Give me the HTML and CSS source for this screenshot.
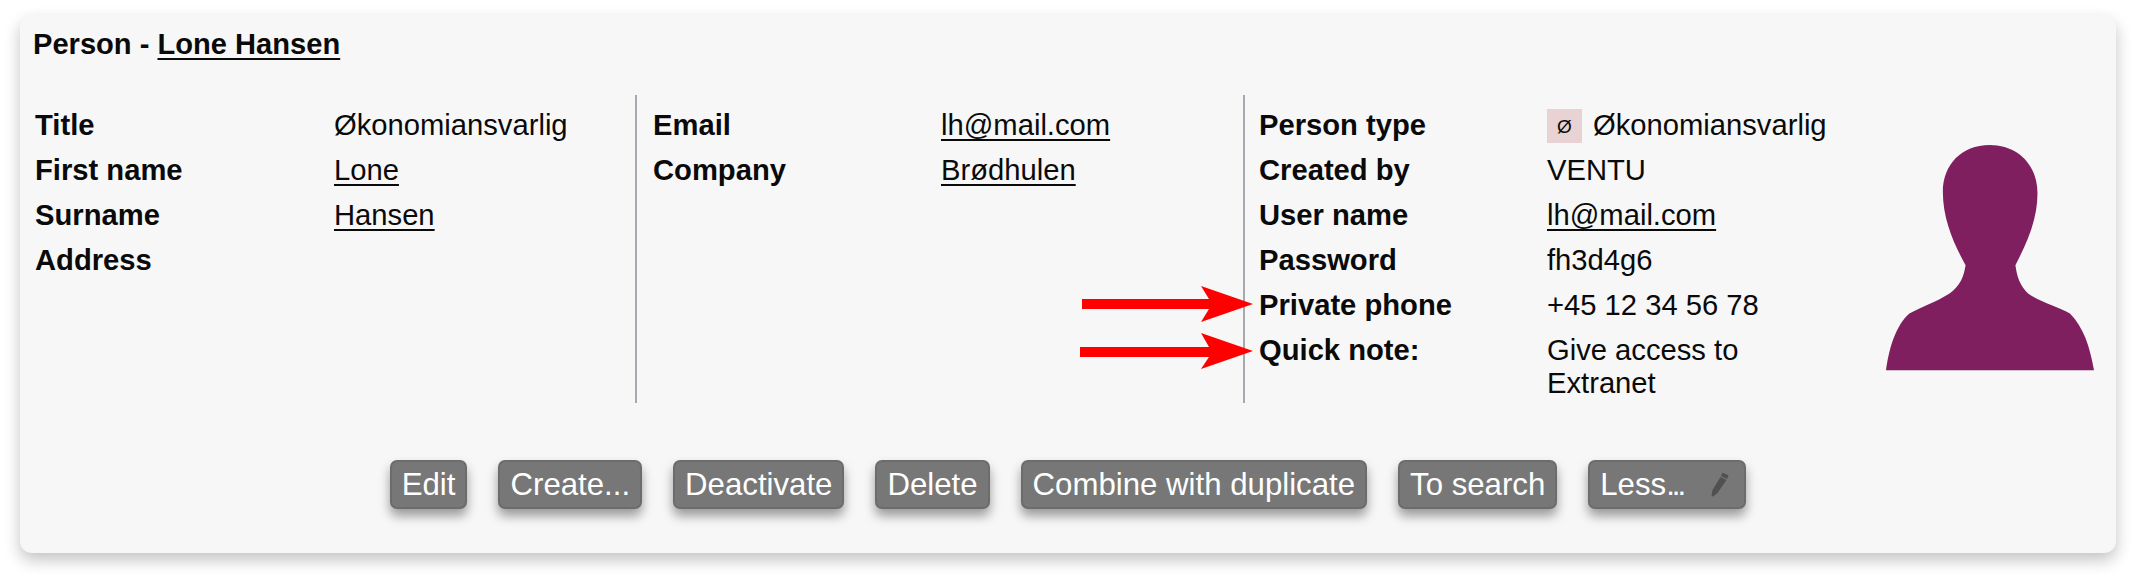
FILE: index.html
```html
<!DOCTYPE html>
<html lang="en">
<head>
<meta charset="utf-8">
<title>Person - Lone Hansen</title>
<link rel="stylesheet" href="styles.css">
</head>
<body>
<main class="card">
  <h1 class="title">Person - <a href="#">Lone Hansen</a></h1>
  <div class="columns">
    <dl class="col col-a">
      <dt>Title</dt><dd>Økonomiansvarlig</dd>
      <dt>First name</dt><dd><a href="#">Lone</a></dd>
      <dt>Surname</dt><dd><a href="#">Hansen</a></dd>
      <dt>Address</dt><dd></dd>
    </dl>
    <dl class="col col-b">
      <dt>Email</dt><dd><a href="#">lh@mail.com</a></dd>
      <dt>Company</dt><dd><a href="#">Brødhulen</a></dd>
    </dl>
    <dl class="col col-c">
      <dt>Person type</dt><dd class="type"><span class="badge">Ø</span>Økonomiansvarlig</dd>
      <dt>Created by</dt><dd>VENTU</dd>
      <dt>User name</dt><dd><a href="#">lh@mail.com</a></dd>
      <dt>Password</dt><dd>fh3d4g6</dd>
      <dt>Private phone</dt><dd>+45 12 34 56 78</dd>
      <dt>Quick note:</dt><dd class="note">Give access to Extranet</dd>
    </dl>
    <svg class="avatar" viewBox="80 45 622 677" preserveAspectRatio="none" aria-hidden="true">
      <path d="M390 45C305 45 250 105 250 185C250 270 285 345 318 405C312 440 303 465 270 490C225 518 185 530 150 550C110 585 90 650 80 720L702 720C690 650 670 590 630 550C595 530 545 518 505 490C480 465 472 440 467 405C495 350 533 275 533 190C533 105 475 45 390 45Z"/>
    </svg>
  </div>
  <div class="actions">
    <button type="button" class="btn">Edit</button>
    <button type="button" class="btn">Create...</button>
    <button type="button" class="btn">Deactivate</button>
    <button type="button" class="btn">Delete</button>
    <button type="button" class="btn">Combine with duplicate</button>
    <button type="button" class="btn">To search</button>
    <button type="button" class="btn btn-less">Less<span class="dots">...</span>
      <svg class="pencil" viewBox="0 0 18 25" aria-hidden="true"><path d="M11.5 0.5L17.5 3.5L16 7L10 4ZM9.5 5L15.5 8L6.5 21L2 24.5L0.5 24L1.5 18Z"/></svg>
    </button>
  </div>
  <svg class="arrow arrow-one" viewBox="0 0 171 36" aria-hidden="true"><path d="M0 13H127L119 0L171 18L119 36L127 23H0Z"/></svg>
  <svg class="arrow arrow-two" viewBox="0 0 173 36" aria-hidden="true"><path d="M0 14H129L121 0L173 18L121 36L129 24H0Z"/></svg>
</main>
</body>
</html>
```
FILE: styles.css
```css
* { box-sizing: border-box; }
html, body { margin: 0; background: #fff; }
body {
  min-height: 575px;
  padding: 15px 15px 22px 20px;
  font-family: "Liberation Sans", Arial, sans-serif;
  color: #0a0a0a;
}
a { color: inherit; text-decoration: underline; text-decoration-thickness: 2px; text-underline-offset: 4px; }

.card {
  position: relative;
  height: 538px;
  padding: 7px 0 44px;
  background: #f7f7f7;
  border-radius: 12px;
  box-shadow: 0 7px 16px rgba(0, 0, 0, .24);
}
.title {
  margin: 0;
  padding-left: 13px;
  font-size: 29.1px;
  font-weight: 700;
  line-height: 45px;
}
.columns { display: flex; height: 308px; margin-top: 28px; }
.col {
  display: grid;
  align-content: start;
  grid-auto-rows: minmax(45px, auto);
  margin: 0;
  padding-top: 8px;
  font-size: 29.2px;
  line-height: 45px;
}
.col dt { font-weight: 700; }
.col dd { margin: 0; }
.col-a { width: 617px; grid-template-columns: 299px 1fr; padding-left: 15px; border-right: 2px solid #a6aaae; }
.col-b { width: 608px; grid-template-columns: 288px 1fr; padding-left: 16px; border-right: 2px solid #a6aaae; }
.col-c { width: 606px; grid-template-columns: 288px 306px; padding-left: 14px; }
.type { display: flex; align-items: center; gap: 11px; }
.badge {
  display: flex;
  align-items: center;
  justify-content: center;
  width: 35px;
  height: 34px;
  margin-top: 1px;
  background: #e8d2d3;
  font-size: 19px;
  line-height: 1;
}
.note { line-height: 33px; padding-top: 6px; }
.avatar { width: 208px; height: 226px; margin: 50px 0 0 35px; fill: #7f1f5f; }

.actions { display: flex; justify-content: center; gap: 31px; margin-top: 57px; }
.btn {
  display: flex;
  align-items: center;
  height: 49px;
  padding: 0 10px;
  border: 2px solid #6c6c6c;
  border-radius: 7px;
  background: #777;
  color: #fff;
  font: 400 31.2px/1 "Liberation Sans", Arial, sans-serif;
  box-shadow: 0 7px 11px rgba(0, 0, 0, .38);
}
.btn-less { width: 158px; }
.dots { letter-spacing: -3px; }
.pencil { width: 18px; height: 25px; margin-left: 28px; fill: #505050; }

.arrow { position: absolute; fill: #fe0000; }
.arrow-one { left: 1062px; top: 271px; width: 171px; height: 36px; }
.arrow-two { left: 1060px; top: 318px; width: 173px; height: 36px; }
```
